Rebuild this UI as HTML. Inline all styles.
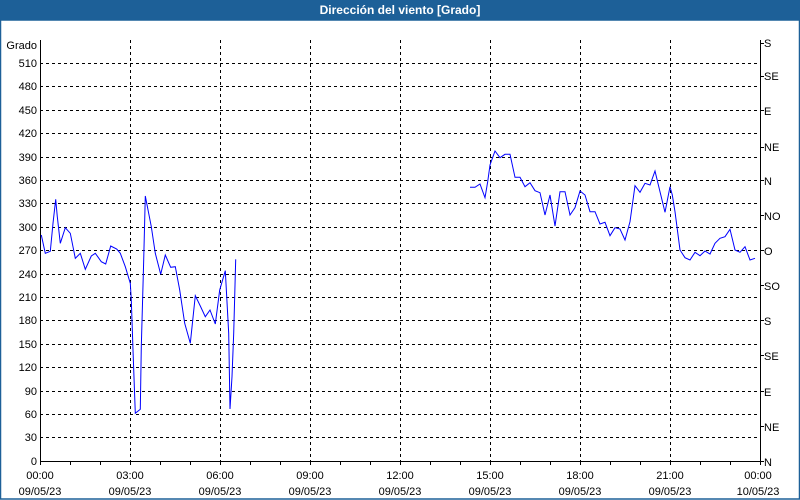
<!DOCTYPE html>
<html><head><meta charset="utf-8"><style>
html,body{margin:0;padding:0;background:#fff;}
svg{display:block;font-family:"Liberation Sans",Tahoma,sans-serif;font-size:11px;}
</style></head><body>
<svg width="800" height="500" xmlns="http://www.w3.org/2000/svg">
<rect x="0" y="0" width="800" height="500" fill="#fff"/>
<rect x="0" y="0" width="800" height="20" fill="#1d6098"/>
<text x="400" y="14" text-anchor="middle" fill="#fff" font-weight="bold" font-size="12">Dirección del viento [Grado]</text>
<rect x="0.5" y="20" width="799" height="479" fill="none" stroke="#1d6098" stroke-width="1.5"/>
<g stroke="#000" stroke-width="1" stroke-dasharray="3,3" shape-rendering="crispEdges">
<line x1="40" x2="760" y1="63.5" y2="63.5"/><line x1="40" x2="760" y1="86.5" y2="86.5"/><line x1="40" x2="760" y1="110.5" y2="110.5"/><line x1="40" x2="760" y1="133.5" y2="133.5"/><line x1="40" x2="760" y1="157.5" y2="157.5"/><line x1="40" x2="760" y1="180.5" y2="180.5"/><line x1="40" x2="760" y1="203.5" y2="203.5"/><line x1="40" x2="760" y1="227.5" y2="227.5"/><line x1="40" x2="760" y1="250.5" y2="250.5"/><line x1="40" x2="760" y1="274.5" y2="274.5"/><line x1="40" x2="760" y1="297.5" y2="297.5"/><line x1="40" x2="760" y1="320.5" y2="320.5"/><line x1="40" x2="760" y1="344.5" y2="344.5"/><line x1="40" x2="760" y1="367.5" y2="367.5"/><line x1="40" x2="760" y1="391.5" y2="391.5"/><line x1="40" x2="760" y1="414.5" y2="414.5"/><line x1="40" x2="760" y1="437.5" y2="437.5"/>
<line x1="130.5" x2="130.5" y1="40" y2="461"/><line x1="220.5" x2="220.5" y1="40" y2="461"/><line x1="310.5" x2="310.5" y1="40" y2="461"/><line x1="400.5" x2="400.5" y1="40" y2="461"/><line x1="490.5" x2="490.5" y1="40" y2="461"/><line x1="580.5" x2="580.5" y1="40" y2="461"/><line x1="670.5" x2="670.5" y1="40" y2="461"/>
</g>
<g stroke="#000" stroke-width="1" shape-rendering="crispEdges" fill="none">
<path d="M40.5 40V461.5H760.5V40"/>
<path d="M70.5 461v4M100.5 461v4M130.5 461v4M160.5 461v4M190.5 461v4M220.5 461v4M250.5 461v4M280.5 461v4M310.5 461v4M340.5 461v4M370.5 461v4M400.5 461v4M430.5 461v4M460.5 461v4M490.5 461v4M520.5 461v4M550.5 461v4M580.5 461v4M610.5 461v4M640.5 461v4M670.5 461v4M700.5 461v4M730.5 461v4M40.5 461v4M760.5 461v4"/>
<path d="M760 43.5h4M760 76.5h4M760 110.5h4M760 147.5h4M760 180.5h4M760 215.5h4M760 250.5h4M760 285.5h4M760 320.5h4M760 355.5h4M760 391.5h4M760 426.5h4M760 461.5h4"/>
</g>
<g text-anchor="end" fill="#000">
<text x="37" y="49">Grado</text>
<text x="37" y="67">510</text><text x="37" y="90">480</text><text x="37" y="114">450</text><text x="37" y="137">420</text><text x="37" y="161">390</text><text x="37" y="184">360</text><text x="37" y="207">330</text><text x="37" y="231">300</text><text x="37" y="254">270</text><text x="37" y="278">240</text><text x="37" y="301">210</text><text x="37" y="324">180</text><text x="37" y="348">150</text><text x="37" y="371">120</text><text x="37" y="395">90</text><text x="37" y="418">60</text><text x="37" y="441">30</text><text x="37" y="465">0</text>
</g>
<g fill="#000">
<text x="764" y="47">S</text><text x="764" y="80">SE</text><text x="764" y="115">E</text><text x="764" y="151">NE</text><text x="764" y="185">N</text><text x="764" y="220">NO</text><text x="764" y="255">O</text><text x="764" y="290">SO</text><text x="764" y="325">S</text><text x="764" y="360">SE</text><text x="764" y="396">E</text><text x="764" y="431">NE</text><text x="764" y="466">N</text>
</g>
<g text-anchor="middle" fill="#000">
<text x="40" y="479">00:00</text><text x="40" y="495">09/05/23</text>
<text x="130" y="479">03:00</text><text x="130" y="495">09/05/23</text>
<text x="220" y="479">06:00</text><text x="220" y="495">09/05/23</text>
<text x="310" y="479">09:00</text><text x="310" y="495">09/05/23</text>
<text x="400" y="479">12:00</text><text x="400" y="495">09/05/23</text>
<text x="490" y="479">15:00</text><text x="490" y="495">09/05/23</text>
<text x="580" y="479">18:00</text><text x="580" y="495">09/05/23</text>
<text x="670" y="479">21:00</text><text x="670" y="495">09/05/23</text>
<text x="758" y="479">00:00</text><text x="758" y="495">10/05/23</text>
</g>
<g fill="none" stroke="#0000ff" stroke-width="1">
<polyline points="41.3,235 45.3,253.3 50.3,251.3 53,223.3 55.7,199.3 57.3,216.7 60.3,243.3 65.3,227.7 70.3,233.3 75.3,258.3 80.3,253.3 85.3,269.3 91.3,256 95.3,253.3 101.3,261.7 105.7,264 110.7,246 116.7,249 120.3,253.3 125.3,266.7 130.3,283.3 131.3,300 133,350 135.3,413.3 140.3,409.3 141.3,346.7 143.7,260 145.3,196 151.3,226.7 155.3,253.3 160.7,274.3 165.3,255 170.7,267.3 175.3,266.7 179.7,290 184.7,323.3 190.3,343.3 195.3,295.7 200.3,306 205.3,316.7 210,310 215.3,324 219.7,290 225.3,270.7 228.7,333.3 230,409 231,393 232,376.7 233.7,333.3 235.7,259.3"/>
<polyline points="470,187.3 475,187.3 480,184 485,197.7 487.7,181.7 490,165 495,151 500,157.7 505,154.3 510,154.3 515,177.3 520,177.3 525,186.7 530,182.7 535,190.7 540,192.7 545,215 550,195 555,226 560,191.7 565,191.7 570,215 575,207.7 580,191 585,195 590,211.7 595,211.7 600,224 605,222.3 610,235.7 615,227.7 620,229 625,240 630,221.7 635,185.7 640,192.3 645,183.3 650,185 655,171 660,191.7 665,212.3 670,186.7 672.3,195 675,211.7 680,250 685,257.7 690,260 695,252.3 700,255.7 705,251 710,254 715,243.3 720,238.3 725,236.7 730,229.3 735,250 740,252.3 745,246.7 750,260 755,258.3"/>
</g>
</svg>
</body></html>
